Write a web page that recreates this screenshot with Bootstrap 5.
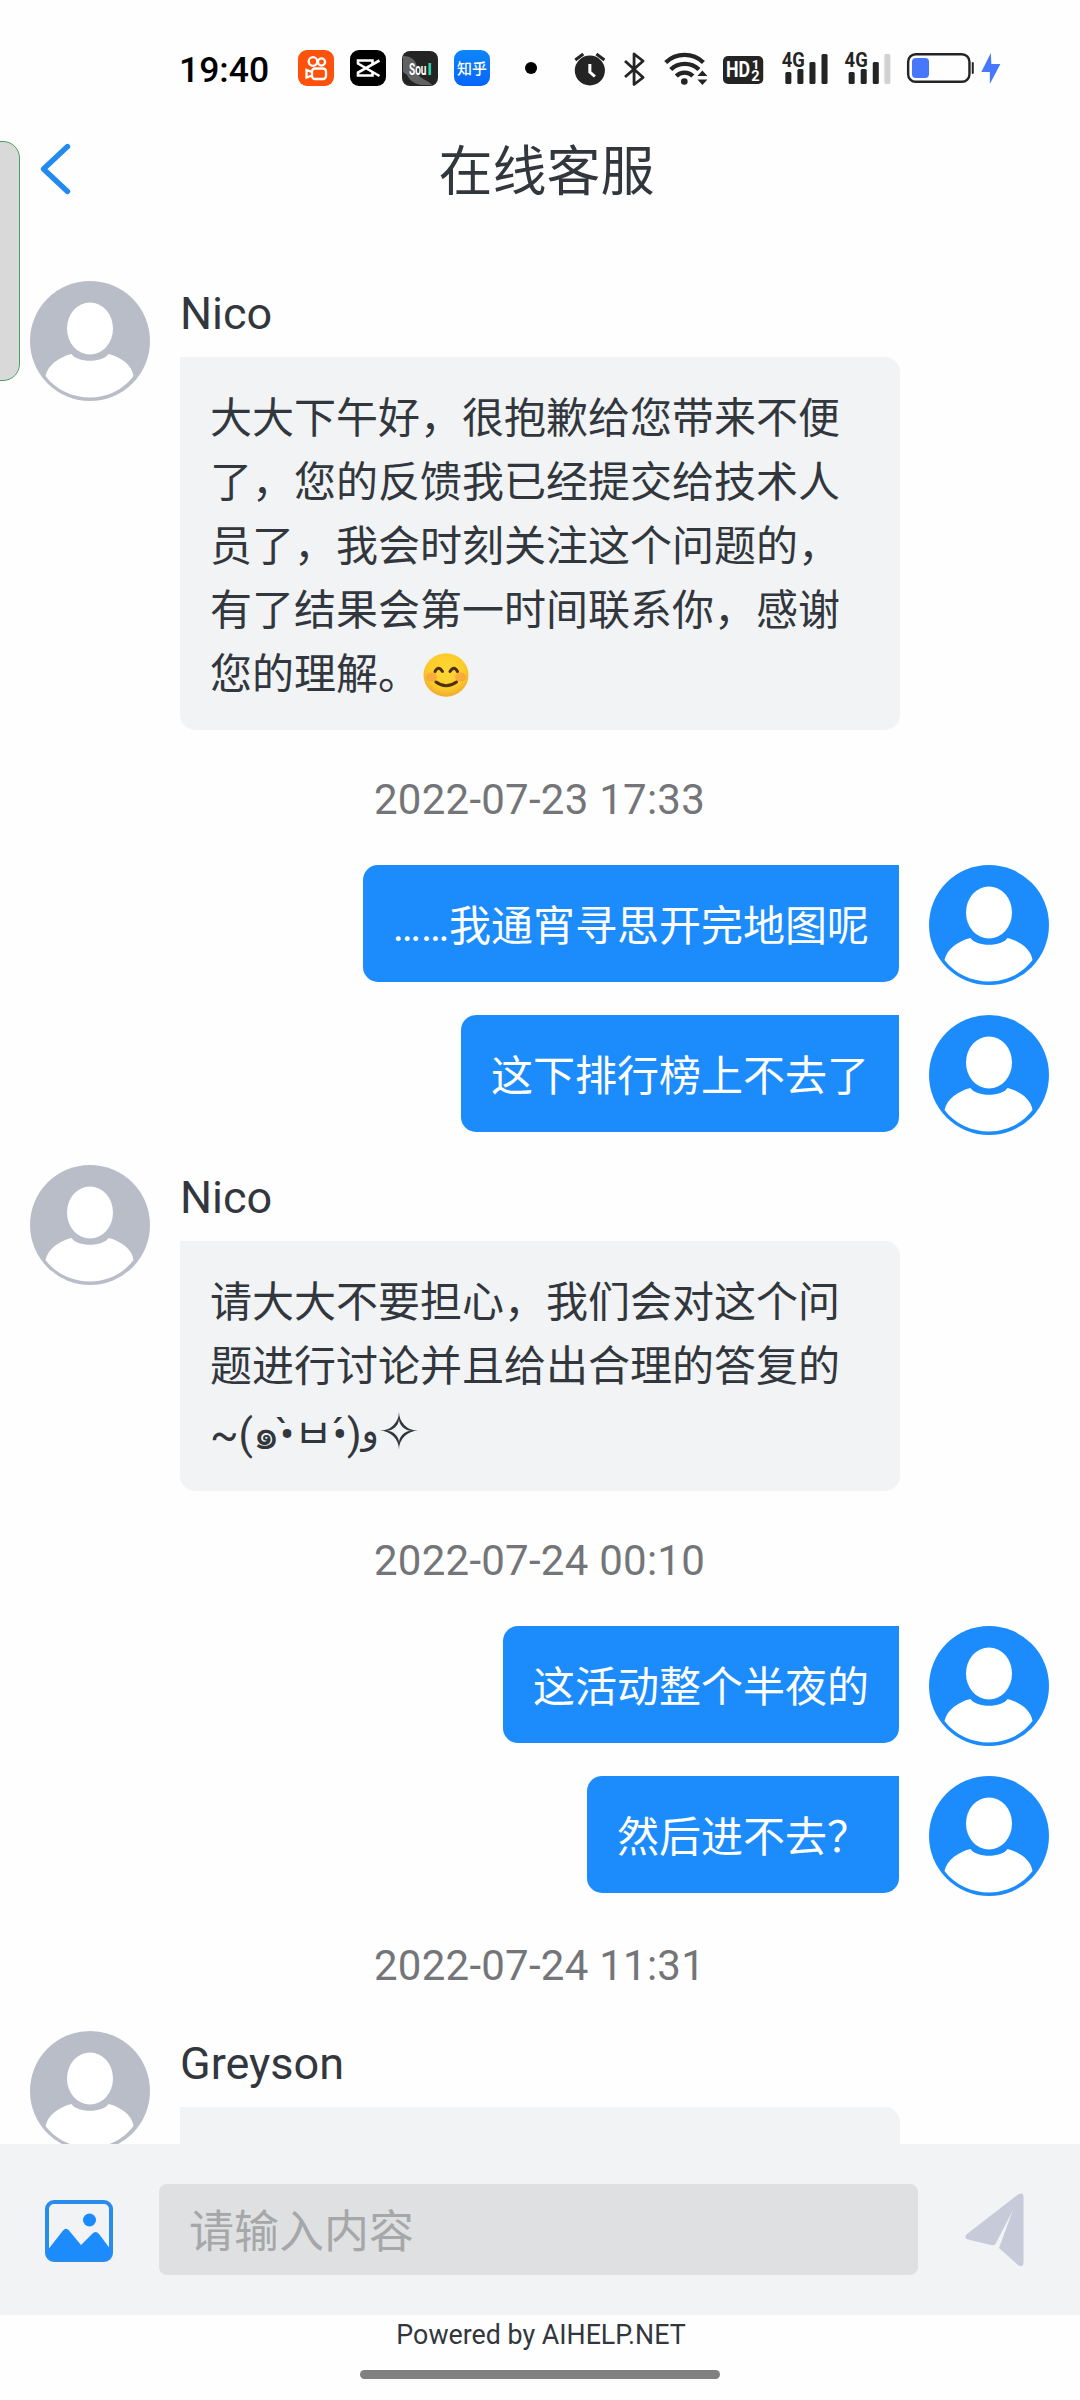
<!DOCTYPE html>
<html lang="zh-CN">
<head>
<meta charset="utf-8">
<meta name="viewport" content="width=device-width, initial-scale=1">
<title>在线客服</title>
<link href="https://cdn.jsdelivr.net/npm/bootstrap@5.3.0/dist/css/bootstrap.min.css" rel="stylesheet">
<style>
body{width:1080px;height:2400px;overflow:hidden;background:#fefefe;color:#32373d;font-family:Roboto,"Noto Sans CJK SC","DejaVu Sans",sans-serif}
svg{display:block;flex:none;overflow:visible}
.screen{height:2400px}
.status{height:110px;padding:26px 0 0 179px}
.clock{width:119px;font-size:35.5px;font-weight:500;line-height:40px;color:#000;padding-top:3px}
.apps{gap:16px}
.topbar{height:121px;padding:0 0 0 40px}
.topbar h1{font-size:54px;line-height:80px;font-weight:400;margin:23px 59px 0 0}
.backbtn{margin-top:34px}
.chat{height:1913px;padding:50px 31px 0 30px}
.incoming{gap:30px}
.sender{height:76px;font-size:45px;line-height:66px}
.bubble-in{width:720px;background:#f1f3f5;border-radius:0 15px 15px 15px;padding:30px 30px 23px;font-size:42px;line-height:64px}
.outgoing{gap:30px;height:120px;margin-bottom:30px}
.bubble-out{height:117px;background:#1c8cfd;color:#fff;border-radius:15px 0 15px 15px;padding:0 30px;font-size:42px;line-height:123px;white-space:nowrap}
.stamp{height:135px;padding-top:3px;font-size:42px;letter-spacing:.25px;color:#737578}
.outgoing + .stamp{margin-top:-30px}
.kao{line-height:72px;height:69px;white-space:nowrap}
.kao-wave{font-size:36px;position:relative;top:-6px}
.kao-star{display:inline-block;font-size:50px;line-height:1;margin-left:-1px}
.smile{display:inline-block;vertical-align:-8px;margin-left:3px}
.composer{height:171px;background:#f1f3f5;padding:40px 56px 0 45px}
.inputbox{width:759px;height:91px;border-radius:8px;background:#dfe0e2;border:0;padding:5px 31px 0 30px;font-size:45px;color:#333;margin-left:46px;font-family:inherit}
.inputbox::placeholder{color:#a5a7a9;opacity:1}
.powered{height:55px;font-size:26.8px;line-height:41px;padding-left:2px}
.homebar{width:360px;height:9px;border-radius:5px;background:#808080}
.edge{left:-20px;top:141px;width:40px;height:240px;background:#d9d9d9;border:1px solid #47a25f;border-radius:17px}
</style>
</head>
<body>
<svg width="0" height="0" class="position-absolute">
  <symbol id="person" viewBox="0 0 120 120">
    <circle cx="60" cy="60" r="60" fill="currentColor"/>
    <ellipse cx="60" cy="47.500" rx="23" ry="26" fill="#fff"/>
    <path d="M41.500 73C47 82 73 82 78.500 73C91 76 102 84 103.500 95C93 109 77 116.500 60 116.500S26 109 15.500 95C18 84 29 76 41.500 73Z" fill="#fff"/>
  </symbol>
  <radialGradient id="glow" cx=".5" cy=".4" r=".6"><stop offset="0" stop-color="#fdd835"/><stop offset=".7" stop-color="#fccb2a"/><stop offset="1" stop-color="#f0a92c"/></radialGradient>
  <linearGradient id="zh" x1="0" y1="0" x2="0" y2="1"><stop offset="0" stop-color="#0d86fb"/><stop offset="1" stop-color="#0765fa"/></linearGradient>
</svg>
<div class="screen d-flex flex-column position-relative">
  <div class="edge position-absolute"></div>
  <div class="status d-flex align-items-center">
    <div class="clock">19:40</div>
    <div class="apps d-flex">
      <svg width="36" height="36" viewBox="0 0 36 36"><rect width="36" height="36" rx="9" fill="#fd520b"/><g fill="none" stroke="#fff" stroke-width="2.300"><circle cx="15" cy="11.500" r="4.300"/><circle cx="23.500" cy="12" r="3.600"/><rect x="14" y="18.500" width="14" height="10.500" rx="3"/><path d="M14 22L8.500 20v7.500l5.500-2"/></g></svg>
      <svg width="36" height="36" viewBox="0 0 36 36"><rect width="36" height="36" rx="9" fill="#000"/><path d="M29.500 10.500L8 22.500V25.500H22.500V22M29.500 26L8 13.500V10.500H22.500V14" fill="none" stroke="#fff" stroke-width="2.600"/></svg>
      <svg width="36" height="36" viewBox="0 0 36 36"><rect y="1" width="36" height="35" rx="8" fill="#242424"/><path d="M1 6C12 6 16 13 15 22C17 29 26 30 30 35H19C10 33 7 29 5 25L1 22Z" fill="#626262"/><text x="7" y="25" font-family="Roboto" font-size="17" font-weight="700" textLength="17.500" lengthAdjust="spacingAndGlyphs" fill="#fff">Sou</text><text x="25.500" y="25" font-family="Roboto" font-size="17" font-weight="700" fill="#28d8bd">l</text></svg>
      <svg width="36" height="36" viewBox="0 0 36 36"><rect width="36" height="36" rx="9" fill="url(#zh)"/><text x="3" y="23.500" font-family="Noto Sans CJK SC" font-size="15" font-weight="500" fill="#fff">知乎</text></svg>
    </div>
    <svg class="ms-auto" width="500" height="40" viewBox="520 48 497.500 40" preserveAspectRatio="none" style="margin-right:60px">
      <g fill="#242424">
      <circle cx="531" cy="68" r="6" fill="#000"/>
      <circle cx="589.500" cy="70.500" r="15"/>
      <path d="M575 60l8-6M604 60l-8-6" stroke="#242424" stroke-width="3"/>
      <path d="M589.500 64v8l5 4.500" fill="none" stroke="#fff" stroke-width="3"/>
      <path d="M624.500 61l18 16.500-9 7V54l9 7-18 16" fill="none" stroke="#242424" stroke-width="2.800" stroke-linejoin="round"/>
      <g fill="none" stroke="#242424" stroke-width="4.300"><path d="M665 62.500a27 27 0 0 1 37.500 0M670 69.500a20 20 0 0 1 28 0M675.500 76a12 12 0 0 1 16.500 0"/></g>
      <circle cx="683.500" cy="81.500" r="3.300"/><path d="M696.500 76l5-5.500 5 5.500zM696.500 79.500l5 5.500 5-5.500z"/>
      <rect x="722" y="56" width="40" height="28" rx="5"/>
      <g font-family="Roboto" fill="#fff" font-weight="700"><text x="725" y="77.500" font-size="22" textLength="24" lengthAdjust="spacingAndGlyphs">HD</text><text x="750.500" y="69" font-size="13.500">1</text><text x="750" y="81" font-size="14.500">2</text></g>
      <g font-family="Roboto" font-weight="700" font-size="20"><text x="780.500" y="67" textLength="23" lengthAdjust="spacingAndGlyphs">4G</text><text x="843" y="67" textLength="23" lengthAdjust="spacingAndGlyphs">4G</text></g>
      <rect x="784" y="72" width="6" height="12" rx="1.500"/><rect x="796" y="69" width="6" height="15" rx="1.500"/><rect x="808" y="62" width="6" height="22" rx="1.500"/><rect x="820" y="54" width="6" height="30" rx="1.500"/>
      <rect x="847" y="72" width="6" height="12" rx="1.500"/><rect x="859" y="69" width="6" height="15" rx="1.500"/><rect x="871" y="62" width="6" height="22" rx="1.500"/><rect x="882.500" y="54" width="6" height="30" rx="1.500" fill="#d2d2d2"/>
      <rect x="906.200" y="54.200" width="61" height="27.600" rx="7.500" fill="none" stroke="#242424" stroke-width="2.400"/><rect x="910" y="58" width="17" height="20" rx="4" fill="#4778fb"/><rect x="969.500" y="62" width="2" height="12" rx="1"/>
      <path d="M988.500 53L979 72h8.500v12L998 64h-9z" fill="#4778fb"/>
      </g>
    </svg>
  </div>
  <header class="topbar d-flex align-items-start">
    <svg class="backbtn" width="32" height="50" viewBox="0 0 32 50"><path d="M27.500 2.500L3.500 25L27.500 47.500" fill="none" stroke="#238bef" stroke-width="5.400" stroke-linecap="round" stroke-linejoin="round"/></svg>
    <h1 class="flex-grow-1 text-center">在线客服</h1>
  </header>
  <main class="chat overflow-hidden">
    <div class="incoming d-flex align-items-start">
      <svg width="120" height="120" color="#b9bdc7"><use href="#person"/></svg>
      <div><div class="sender">Nico</div>
      <div class="bubble-in">大大下午好，很抱歉给您带来不便<br>了，您的反馈我已经提交给技术人<br>员了，我会时刻关注这个问题的，<br>有了结果会第一时间联系你，感谢<br>您的理解。<svg class="smile" role="img" width="46" height="44" viewBox="0 0 46 44"><ellipse cx="23" cy="22" rx="22.500" ry="21.700" fill="url(#glow)"/><ellipse cx="8.500" cy="24" rx="5.500" ry="4.500" fill="#f28a4a" opacity=".5"/><ellipse cx="37.500" cy="24" rx="5.500" ry="4.500" fill="#f28a4a" opacity=".5"/><path d="M12 18.500Q15.500 12 19.500 18.500M27 18.500Q31 12 34.500 18.500M13 29Q23 36.500 33.500 29" fill="none" stroke="#4e2e14" stroke-width="3" stroke-linecap="round"/></svg></div></div>
    </div>
    <div class="stamp d-flex align-items-center justify-content-center">2022-07-23 17:33</div>
    <div class="outgoing d-flex justify-content-end"><div class="bubble-out">……我通宵寻思开完地图呢</div><svg width="120" height="120" color="#1c8cfd"><use href="#person"/></svg></div>
    <div class="outgoing d-flex justify-content-end"><div class="bubble-out">这下排行榜上不去了</div><svg width="120" height="120" color="#1c8cfd"><use href="#person"/></svg></div>
    <div class="incoming d-flex align-items-start">
      <svg width="120" height="120" color="#b9bdc7"><use href="#person"/></svg>
      <div><div class="sender">Nico</div>
      <div class="bubble-in">请大大不要担心，我们会对这个问<br>题进行讨论并且给出合理的答复的<div class="kao">~(๑•̀ㅂ•́)<span class="kao-wave">و</span><span class="kao-star">✧</span></div></div></div>
    </div>
    <div class="stamp d-flex align-items-center justify-content-center">2022-07-24 00:10</div>
    <div class="outgoing d-flex justify-content-end"><div class="bubble-out">这活动整个半夜的</div><svg width="120" height="120" color="#1c8cfd"><use href="#person"/></svg></div>
    <div class="outgoing d-flex justify-content-end"><div class="bubble-out">然后进不去？</div><svg width="120" height="120" color="#1c8cfd"><use href="#person"/></svg></div>
    <div class="stamp d-flex align-items-center justify-content-center">2022-07-24 11:31</div>
    <div class="incoming d-flex align-items-start">
      <svg width="120" height="120" color="#b9bdc7"><use href="#person"/></svg>
      <div><div class="sender">Greyson</div><div class="bubble-in"></div></div>
    </div>
  </main>
  <div class="composer d-flex align-items-start">
    <svg style="margin-top:15px" width="68" height="62" viewBox="0 0 68 62"><rect x="2" y="3" width="64" height="58" rx="7" fill="none" stroke="#2a8bea" stroke-width="4"/><path d="M2 52L18 31.500Q21 28 24 31.500L36 46L47 35Q50.500 31 54 35L66 51V55Q66 61 59 61H9Q2 61 2 55Z" fill="#1c8cfd"/><circle cx="44.500" cy="21" r="6.500" fill="#1c8cfd"/></svg>
    <input class="inputbox" type="text" placeholder="请输入内容">
    <svg class="ms-auto" style="margin-top:9px" width="59" height="73" viewBox="0 0 59 73"><path d="M53 1.500Q58.500-1.500 58.500 4V70Q58 75 53 72L34 55L48 17L31 50Q29.500 53 26 52L3 46.500Q-2 45 2 41Z" fill="#c7cad9"/></svg>
  </div>
  <div class="powered text-center">Powered by AIHELP.NET</div>
  <div class="homebar mx-auto"></div>
</div>
<script src="https://cdn.jsdelivr.net/npm/bootstrap@5.3.0/dist/js/bootstrap.bundle.min.js"></script>
</body>
</html>
